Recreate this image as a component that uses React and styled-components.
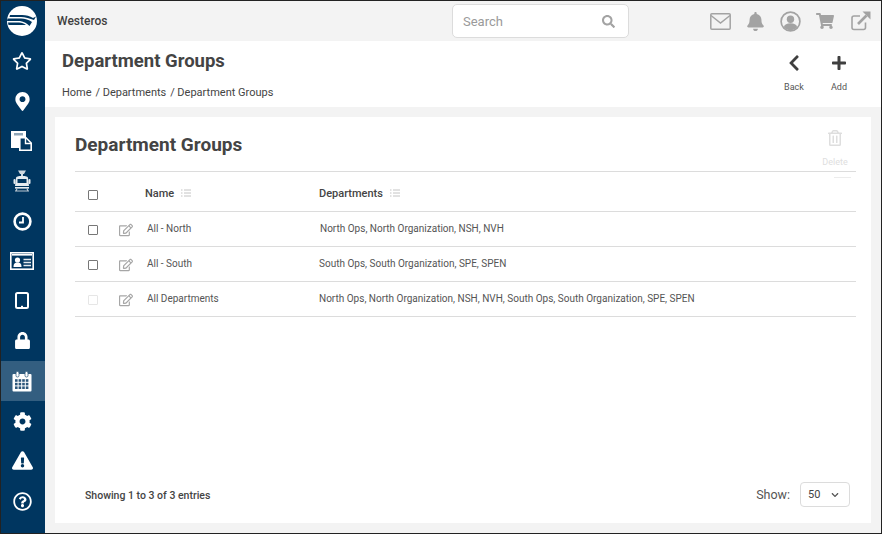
import React from 'react';
import styled, { createGlobalStyle } from 'styled-components';
import {
  FaRegStar,
  FaMapMarkerAlt,
  FaLock,
  FaCog,
  FaExclamationTriangle,
  FaRegQuestionCircle,
  FaBell,
  FaShoppingCart,
  FaChevronLeft,
  FaPlus,
  FaSearch,
  FaRegTrashAlt,
  FaRegEdit,
  FaChevronDown,
} from 'react-icons/fa';

const navy = '#003660';

const rows = [
  { name: 'All - North', departments: 'North Ops, North Organization, NSH, NVH', indent: 1 },
  { name: 'All - South', departments: 'South Ops, South Organization, SPE, SPEN', indent: 0 },
  {
    name: 'All Departments',
    departments: 'North Ops, North Organization, NSH, NVH, South Ops, South Organization, SPE, SPEN',
    indent: 0,
    disabled: true,
  },
];

function Logo() {
  return (
    <svg width="30" height="30" viewBox="0 0 30 30">
      <circle cx="15" cy="15" r="15" fill="#fff" />
      <path d="M3 9 H15 C19 9 23 10 26 12 L29 10.5 L27 14 C23 12.5 18 11 14 11 H2.5Z" fill={navy} />
      <path d="M0.5 12.5 H14 C18 12.5 22 14 25 16 L22.5 20 C20 17.5 17 15.5 13 15 H0Z" fill={navy} />
      <path d="M1 16.5 H12 C15 16.5 17 17.5 19 19 H1.5Z" fill={navy} />
    </svg>
  );
}

function FilesIcon() {
  return (
    <svg width="22" height="22" viewBox="0 0 22 22">
      <rect x="0" y="1" width="15" height="17" fill="#fff" />
      <rect x="3" y="3" width="9" height="2.5" fill="#8fa6b8" />
      <path d="M8.8 7.8 H15 L20.2 13 V20.2 H8.8Z" fill={navy} stroke="#fff" strokeWidth="1.6" />
      <path d="M14.5 8 V13.5 H20" fill="none" stroke="#fff" strokeWidth="1.4" />
    </svg>
  );
}

function TramIcon() {
  return (
    <svg width="20" height="22" viewBox="0 0 20 22">
      <path d="M6 0.5 H14 L12 4 H8Z" fill="#cfd8df" />
      <rect x="9" y="3.5" width="2" height="3" fill="#cfd8df" />
      <path d="M4 8 C4 6.5 6 6 10 6 C14 6 16 6.5 16 8 L17 16 H3Z" fill="#e6ebef" />
      <rect x="1.5" y="9" width="2" height="5" rx="1" fill="#e6ebef" />
      <rect x="16.5" y="9" width="2" height="5" rx="1" fill="#e6ebef" />
      <rect x="5.5" y="9" width="9" height="4" fill={navy} />
      <rect x="3" y="17" width="14" height="1.6" fill="#e6ebef" />
      <path d="M3 21 H17 M5 18.5 L4 21 M15 18.5 L16 21" stroke="#b9c6d0" strokeWidth="1.2" fill="none" />
    </svg>
  );
}

function ClockIcon() {
  return (
    <svg width="19" height="19" viewBox="0 0 19 19">
      <circle cx="9.5" cy="9.5" r="7.9" fill="none" stroke="#fff" strokeWidth="2.6" />
      <path d="M10 5 V10.5 H6" fill="none" stroke="#fff" strokeWidth="1.8" />
    </svg>
  );
}

function CardIcon() {
  return (
    <svg width="24" height="18" viewBox="0 0 24 18">
      <rect x="0.8" y="0.8" width="22.4" height="16.4" fill={navy} stroke="#fff" strokeWidth="1.6" />
      <rect x="2" y="2" width="20" height="1.6" fill="#fff" />
      <circle cx="7.5" cy="8" r="2.6" fill="#fff" />
      <path d="M3.5 15 C3.5 11.5 5 10.5 7.5 10.5 C10 10.5 11.5 11.5 11.5 15Z" fill="#fff" />
      <path d="M13.5 7.5 H21 M13.5 10.5 H21 M13.5 13.5 H21" stroke="#e3e9ee" strokeWidth="1.4" />
    </svg>
  );
}

function TabletIcon() {
  return (
    <svg width="14" height="17" viewBox="0 0 14 17">
      <rect x="1" y="1" width="12" height="15" rx="1.5" fill="none" stroke="#fff" strokeWidth="2" />
      <rect x="6" y="13.8" width="2" height="1.2" fill="#fff" />
    </svg>
  );
}

function CalendarIcon() {
  const cells = [];
  for (let r = 0; r < 3; r += 1) {
    for (let c = 0; c < 4; c += 1) {
      cells.push(<rect key={`${r}-${c}`} x={3 + c * 3.6} y={8.2 + r * 3.6} width="2.6" height="2.6" fill="#2c567a" />);
    }
  }
  return (
    <svg width="20" height="21" viewBox="0 0 20 21">
      <rect x="0.5" y="3" width="19" height="17.5" rx="1" fill="#fff" />
      {cells}
      <rect x="4" y="0.5" width="3" height="5.5" rx="1.4" fill="#fff" stroke="#335e80" strokeWidth="0.8" />
      <rect x="13" y="0.5" width="3" height="5.5" rx="1.4" fill="#fff" stroke="#335e80" strokeWidth="0.8" />
    </svg>
  );
}

function EnvelopeIcon() {
  return (
    <svg width="21" height="17" viewBox="0 0 21 17">
      <rect x="0.8" y="0.8" width="19.4" height="15.4" rx="1" fill="none" stroke="#a3a3a3" strokeWidth="1.5" />
      <path d="M1 2.5 L10.5 10 L20 2.5" fill="none" stroke="#a3a3a3" strokeWidth="1.5" />
    </svg>
  );
}

function UserIcon() {
  return (
    <svg width="21" height="21" viewBox="0 0 21 21">
      <circle cx="10.5" cy="10.5" r="9.4" fill="none" stroke="#a3a3a3" strokeWidth="1.7" />
      <circle cx="10.5" cy="8.3" r="3.7" fill="#a3a3a3" />
      <path d="M3.8 16.2 C4.5 13.2 7 12.2 10.5 12.2 C14 12.2 16.5 13.2 17.2 16.2 C15.5 18.2 13 19.2 10.5 19.2 C8 19.2 5.5 18.2 3.8 16.2Z" fill="#a3a3a3" />
    </svg>
  );
}

function ExternalIcon() {
  return (
    <svg width="20" height="20" viewBox="0 0 20 20">
      <path d="M14.5 11.5 V16.5 C14.5 17.6 13.6 18.5 12.5 18.5 H3 C1.9 18.5 1 17.6 1 16.5 V7 C1 5.9 1.9 5 3 5 H9" fill="none" stroke="#a3a3a3" strokeWidth="1.6" />
      <path d="M7 13 L15.5 4.5" stroke="#a3a3a3" strokeWidth="2.6" fill="none" />
      <path d="M11.5 0.5 H19.5 V8.5Z" fill="#a3a3a3" />
    </svg>
  );
}

function ListIcon() {
  return (
    <svg width="10" height="8" viewBox="0 0 10 8">
      <path d="M0 1 H1.5 M3 1 H10 M0 4 H1.5 M3 4 H10 M0 7 H1.5 M3 7 H10" stroke="#c4c4c4" strokeWidth="1" fill="none" />
    </svg>
  );
}

export default function App() {
  return (
    <Frame>
      <GlobalStyle />
      <Sidebar>
        <LogoSlot>
          <Logo />
        </LogoSlot>
        <NavItem><FaRegStar size={20} /></NavItem>
        <NavItem><FaMapMarkerAlt size={19} /></NavItem>
        <NavItem><FilesIcon /></NavItem>
        <NavItem><TramIcon /></NavItem>
        <NavItem><ClockIcon /></NavItem>
        <NavItem><CardIcon /></NavItem>
        <NavItem $raised><TabletIcon /></NavItem>
        <NavItem $raised><FaLock size={17} /></NavItem>
        <NavItem $active><CalendarIcon /></NavItem>
        <NavItem><FaCog size={19} /></NavItem>
        <NavItem $raised><FaExclamationTriangle size={21} /></NavItem>
        <NavItem><FaRegQuestionCircle size={19} /></NavItem>
      </Sidebar>
      <Main>
        <TopBar>
          <Brand>Westeros</Brand>
          <SearchBox>
            <SearchLabel>Search</SearchLabel>
            <FaSearch size={13} color="#a3a3a3" />
          </SearchBox>
          <TopIcons>
            <TopIcon><EnvelopeIcon /></TopIcon>
            <TopIcon><FaBell size={19} /></TopIcon>
            <TopIcon><UserIcon /></TopIcon>
            <TopIcon $shift={-1}><FaShoppingCart size={18} /></TopIcon>
            <TopIcon><ExternalIcon /></TopIcon>
          </TopIcons>
        </TopBar>
        <PageHeader>
          <div>
            <PageTitle>Department Groups</PageTitle>
            <Crumbs>
              <span>Home</span>
              <CrumbSep>/</CrumbSep>
              <span>Departments</span>
              <CrumbSep>/</CrumbSep>
              <span>Department Groups</span>
            </Crumbs>
          </div>
          <HeaderActions>
            <HeaderAction>
              <ActionIcon><FaChevronLeft size={18} color="#3f3f3f" /></ActionIcon>
              <span>Back</span>
            </HeaderAction>
            <HeaderAction>
              <ActionIcon><FaPlus size={16} color="#3f3f3f" /></ActionIcon>
              <span>Add</span>
            </HeaderAction>
          </HeaderActions>
        </PageHeader>
        <Content>
          <Card>
            <CardHead>
              <CardTitle>Department Groups</CardTitle>
              <DeleteAction>
                <FaRegTrashAlt size={16} />
                <span>Delete</span>
              </DeleteAction>
            </CardHead>
            <DeleteRule />
            <Table>
              <thead>
                <tr>
                  <CheckCell as="th"><Box /></CheckCell>
                  <EditCell as="th" />
                  <HeadCell>
                    <HeadLabel>Name <ListIcon /></HeadLabel>
                  </HeadCell>
                  <HeadCell>
                    <HeadLabel>Departments <ListIcon /></HeadLabel>
                  </HeadCell>
                </tr>
              </thead>
              <tbody>
                {rows.map((row) => (
                  <tr key={row.name}>
                    <CheckCell><Box $disabled={row.disabled} /></CheckCell>
                    <EditCell><FaRegEdit size={14} color="#a6a6a6" /></EditCell>
                    <NameCell>{row.name}</NameCell>
                    <DeptCell $indent={row.indent}>{row.departments}</DeptCell>
                  </tr>
                ))}
              </tbody>
            </Table>
            <Footer>
              <Entries>Showing 1 to 3 of 3 entries</Entries>
              <ShowWrap>
                <ShowLabel>Show:</ShowLabel>
                <ShowSelect>
                  <span>50</span>
                  <FaChevronDown size={8} color="#555" />
                </ShowSelect>
              </ShowWrap>
            </Footer>
          </Card>
        </Content>
      </Main>
    </Frame>
  );
}

const GlobalStyle = createGlobalStyle`
  html, body {
    margin: 0;
    padding: 0;
    background: #fff;
  }
  body {
    font-family: Roboto, "Liberation Sans", sans-serif;
  }
`;

const Frame = styled.div`
  box-sizing: border-box;
  width: 882px;
  height: 534px;
  border: 1px solid #222;
  display: flex;
  overflow: hidden;
  background: #f3f3f3;
`;

const Sidebar = styled.nav`
  width: 44px;
  flex: none;
  background: ${navy};
  display: flex;
  flex-direction: column;
`;

const LogoSlot = styled.div`
  height: 40px;
  display: flex;
  align-items: center;
  justify-content: center;
  flex: none;
  box-sizing: border-box;
  padding-right: 2px;
`;

const NavItem = styled.div`
  height: 40px;
  flex: none;
  box-sizing: border-box;
  padding-right: 2px;
  padding-bottom: ${(p) => (p.$raised ? '2px' : '0')};
  display: flex;
  align-items: center;
  justify-content: center;
  color: #fff;
  background: ${(p) => (p.$active ? '#335e80' : 'transparent')};
`;

const Main = styled.div`
  flex: 1;
  min-width: 0;
  display: flex;
  flex-direction: column;
`;

const TopBar = styled.header`
  height: 40px;
  flex: none;
  display: flex;
  align-items: center;
  padding-left: 12px;
  background: #f3f3f3;
`;

const Brand = styled.div`
  width: 395px;
  font-size: 12px;
  font-weight: 500;
  color: #3f3f3f;
`;

const SearchBox = styled.div`
  box-sizing: border-box;
  width: 177px;
  height: 34px;
  background: #fff;
  border: 1px solid #dcdcdc;
  border-radius: 5px;
  display: flex;
  align-items: center;
  justify-content: space-between;
  padding: 0 13px 0 10px;
`;

const SearchLabel = styled.span`
  font-size: 13px;
  color: #9a9a9a;
`;

const TopIcons = styled.div`
  display: flex;
  align-items: center;
  margin-left: 80px;
  gap: 12px;
`;

const TopIcon = styled.div`
  width: 23px;
  display: flex;
  justify-content: center;
  color: #a3a3a3;
  transform: translateX(${(p) => p.$shift || 0}px);
`;

const PageHeader = styled.div`
  height: 66px;
  flex: none;
  box-sizing: border-box;
  background: #fff;
  display: flex;
  justify-content: space-between;
  padding: 8px 32px 0 17px;
`;

const PageTitle = styled.h1`
  margin: 0;
  font-size: 18.5px;
  line-height: 24px;
  font-weight: 700;
  color: #444;
`;

const Crumbs = styled.div`
  margin-top: 13px;
  display: flex;
  font-size: 11px;
  line-height: 14px;
  color: #444;
`;

const CrumbSep = styled.span`
  margin: 0 2.5px 0 4px;
`;

const HeaderActions = styled.div`
  display: flex;
  gap: 25px;
`;

const HeaderAction = styled.div`
  width: 20px;
  padding-top: 4px;
  display: flex;
  flex-direction: column;
  align-items: center;
  gap: 9px;
  span {
    font-size: 9px;
    line-height: 12px;
    color: #555;
  }
`;

const ActionIcon = styled.div`
  height: 19px;
  display: flex;
  align-items: center;
  justify-content: center;
`;

const Content = styled.main`
  flex: 1;
  min-height: 0;
  padding: 10px;
  display: flex;
`;

const Card = styled.section`
  flex: 1;
  position: relative;
  background: #fff;
  display: flex;
  flex-direction: column;
  padding: 0 15px 0 20px;
`;

const CardHead = styled.div`
  height: 54px;
  box-sizing: border-box;
  flex: none;
  display: flex;
  justify-content: space-between;
  padding-top: 15px;
`;

const CardTitle = styled.h2`
  margin: 0;
  font-size: 19px;
  line-height: 25px;
  font-weight: 700;
  color: #444;
`;

const DeleteAction = styled.div`
  width: 26px;
  margin-right: 8px;
  margin-top: -2px;
  display: flex;
  flex-direction: column;
  align-items: center;
  gap: 10px;
  color: #dedede;
  span {
    font-size: 9px;
    line-height: 12px;
  }
`;

const DeleteRule = styled.div`
  position: absolute;
  top: 60px;
  right: 20px;
  width: 17px;
  height: 1px;
  background: #ececec;
`;

const Table = styled.table`
  width: 100%;
  border-collapse: collapse;
  border-top: 1px solid #dcdcdc;
  table-layout: fixed;
  tr {
    border-bottom: 1px solid #dcdcdc;
  }
  thead tr {
    height: 40px;
  }
  tbody tr {
    height: 35px;
  }
`;

const CheckCell = styled.td`
  width: 36px;
  padding: 1px 0 0 13px;
  box-sizing: border-box;
  vertical-align: middle;
  thead & {
    padding-top: 6px;
  }
`;

const EditCell = styled.td`
  width: 34px;
  padding: 5px 0 0 8px;
  box-sizing: border-box;
  vertical-align: middle;
`;

const HeadCell = styled.th`
  text-align: left;
  padding: 3px 0 0;
  font-size: 11px;
  font-weight: 500;
  color: #444;
  &:nth-child(3) {
    width: 174px;
  }
`;

const HeadLabel = styled.span`
  display: inline-flex;
  align-items: center;
  gap: 7px;
`;

const NameCell = styled.td`
  padding: 0 0 1px 2px;
  font-size: 10px;
  color: #555;
`;

const DeptCell = styled.td`
  padding: 0 0 1px ${(p) => p.$indent}px;
  font-size: 10px;
  color: #555;
`;

const Box = styled.span`
  display: block;
  box-sizing: border-box;
  width: 10px;
  height: 10px;
  border: 1px solid ${(p) => (p.$disabled ? '#e6e6e6' : '#777')};
  border-radius: 1px;
`;

const Footer = styled.div`
  margin-top: auto;
  height: 54px;
  box-sizing: border-box;
  flex: none;
  display: flex;
  justify-content: space-between;
  align-items: flex-start;
  padding: 13px 6px 0 10px;
`;

const Entries = styled.div`
  margin-top: 7px;
  font-size: 10.5px;
  font-weight: 500;
  color: #444;
`;

const ShowWrap = styled.div`
  display: flex;
  align-items: center;
  gap: 10px;
`;

const ShowLabel = styled.span`
  font-size: 12.5px;
  color: #555;
`;

const ShowSelect = styled.div`
  box-sizing: border-box;
  width: 50px;
  height: 25px;
  border: 1px solid #dcdcdc;
  border-radius: 4px;
  display: flex;
  align-items: center;
  justify-content: space-between;
  padding: 0 10px 0 7px;
  font-size: 11px;
  color: #444;
`;
